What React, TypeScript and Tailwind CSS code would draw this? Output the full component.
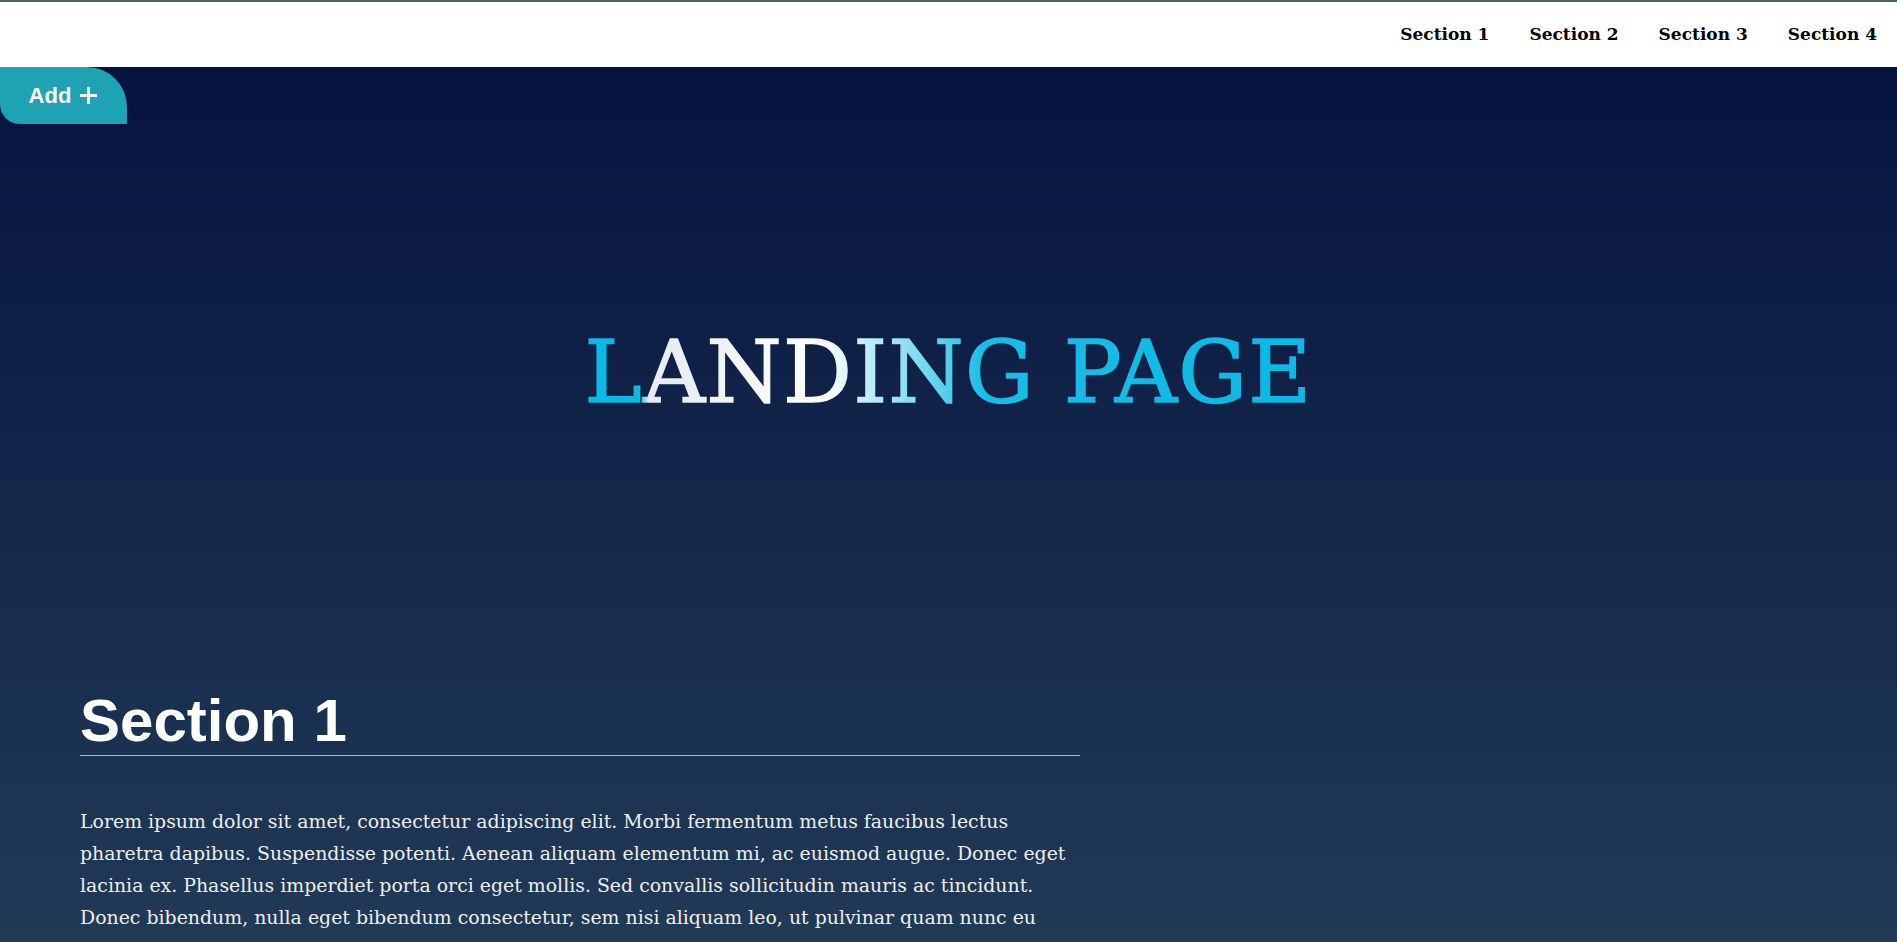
import React from "react";

const navItems = ["Section 1", "Section 2", "Section 3", "Section 4"];

export default function App() {
  return (
    <div className="min-h-screen font-['DejaVu_Serif',serif] text-white bg-[linear-gradient(180deg,#04113e_0px,#213a56_942px,#3d6a7a_2400px)]">
      <header className="bg-white border-t-2 border-[#4f6068]">
        <nav>
          <ul className="flex justify-end">
            {navItems.map((item) => (
              <li key={item}>
                <a href="#" className="block px-5 py-5 text-[17px] leading-[25px] font-bold text-black">
                  {item}
                </a>
              </li>
            ))}
          </ul>
        </nav>
      </header>

      <button className="absolute left-0 top-[67px] flex h-[57px] w-[127px] items-center justify-center gap-2 rounded-tr-[40px] rounded-bl-[20px] bg-[#1ea3b5] font-['Liberation_Sans',Arial,sans-serif] text-[22px] font-bold text-white">
        <span>Add</span>
        <svg width="19" height="19" viewBox="0 0 19 19" fill="none" stroke="white" strokeWidth="2.8">
          <path d="M9.5 1v17M1 9.5h17" />
        </svg>
      </button>

      <main className="pt-[262px]">
        <h1 className="text-center text-[86px] leading-none tracking-[1.3px]">
          <span className="inline-block bg-[linear-gradient(90deg,#0cb8e5_0%,#0cb8e5_7.4%,#e6ebf1_8.8%,#ffffff_33%,#c8eff9_38%,#7fd9f1_46%,#18bde6_55%,#0cb8e5_100%)] bg-clip-text text-transparent [-webkit-text-stroke:1.6px_transparent]">
            LANDING PAGE
          </span>
        </h1>

        <section className="mt-[271px] pl-[80px]">
          <div className="w-[1000px]">
            <h2 className="border-b border-[#cccc11] font-['Liberation_Sans',Arial,sans-serif] text-[60px] font-bold leading-[69px] text-white">
              Section 1
            </h2>
            <p className="mt-[49px] text-[18.9px] leading-[32px] text-[#eeeeee]">
              Lorem ipsum dolor sit amet, consectetur adipiscing elit. Morbi fermentum metus faucibus lectus pharetra dapibus. Suspendisse potenti. Aenean aliquam elementum mi, ac euismod augue. Donec eget lacinia ex. Phasellus imperdiet porta orci eget mollis. Sed convallis sollicitudin mauris ac tincidunt. Donec bibendum, nulla eget bibendum consectetur, sem nisi aliquam leo, ut pulvinar quam nunc eu augue. Pellentesque maximus imperdiet elit a pharetra. Duis lectus mi, aliquam in mi quis, aliquam porttitor lacus. Morbi a tincidunt felis. Sed leo nunc, pharetra et elementum non, faucibus vitae elit. Integer nec libero venenatis libero ultricies molestie semper in tellus. Sed congue et odio sed euismod.
            </p>
            <p className="mt-[20px] text-[18.9px] leading-[32px] text-[#eeeeee]">
              Aliquam a convallis justo. Vivamus venenatis, erat eget pulvinar gravida, ipsum lacus aliquet velit, vel luctus diam ipsum a diam. Cras eu tincidunt arcu, vitae rhoncus purus. Vestibulum fermentum consectetur porttitor. Suspendisse imperdiet porttitor tortor, eget elementum tortor mollis non.
            </p>
          </div>
        </section>
      </main>
    </div>
  );
}
